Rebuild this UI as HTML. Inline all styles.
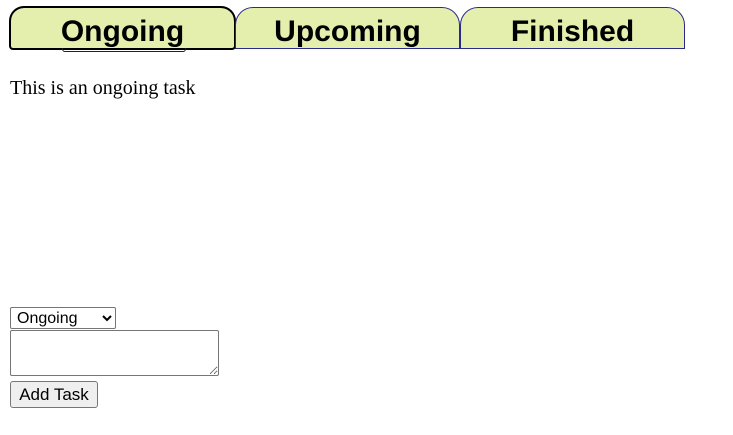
<!DOCTYPE html>
<html><head><style>
body{margin:0;padding:0;background:#fff;font-family:"Liberation Serif",serif;}
.tabs{position:absolute;left:10px;top:7px;}
.tab{position:absolute;top:0;width:223px;height:40px;background:#e5efad;border:1px solid #2a2a8a;border-radius:18px 18px 0 0;font:bold 30px "Liberation Sans",sans-serif;text-align:center;line-height:47px;color:#000;box-sizing:content-box;}
.act{outline:2px solid #000;outline-offset:-1px;border-radius:14px 14px 3px 3px;}
.ul{position:absolute;left:51px;top:40px;width:122px;height:3px;border:1px solid #222;border-top:none;border-radius:0 0 3px 3px;}
p{position:absolute;left:10px;top:77px;margin:0;font-size:20px;}
select{position:absolute;left:10px;top:307px;width:106px;height:22px;font:16px "Liberation Sans",sans-serif;border:1px solid #767676;border-radius:2px;background:#fff;padding:0 2px;}
textarea{position:absolute;left:10px;top:330px;width:209px;height:46px;box-sizing:border-box;border:1px solid #767676;border-radius:2px;margin:0;}
button{position:absolute;left:10px;top:381px;width:88px;height:27px;font:17px "Liberation Sans",sans-serif;border:1px solid #767676;border-radius:3px;background:#efefef;padding:0;}
</style></head><body>
<div class="tabs">
<div class="tab act" style="left:0">Ongoing<div class="ul"></div></div>
<div class="tab" style="left:225px">Upcoming</div>
<div class="tab" style="left:450px">Finished</div>
</div>
<p>This is an ongoing task</p>
<select><option>Ongoing</option></select>
<textarea></textarea>
<button>Add Task</button>
</body></html>
